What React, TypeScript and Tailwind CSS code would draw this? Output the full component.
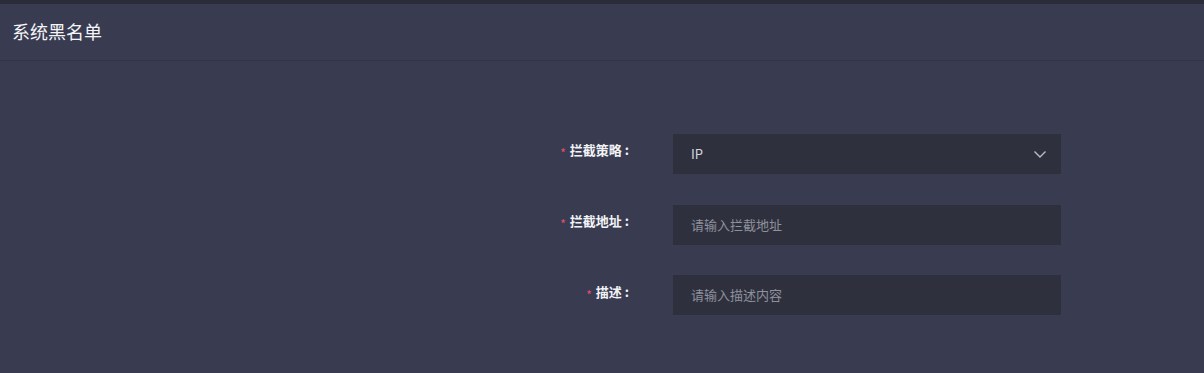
import React from "react";

const font = { fontFamily: '"Noto Sans CJK SC", "Liberation Sans", sans-serif' };

function Label({ text }: { text: string }) {
  return (
    <div className="flex h-[40px] items-center justify-end pr-[4px] pb-[8px] text-[13px] font-bold text-[#f2f3f7]">
      <span className="mr-[4px] mt-[6px] text-[12px] font-normal leading-none text-[#e2506a]">*</span>
      <span>{text}</span>
      <span className="ml-[3px]">:</span>
    </div>
  );
}

export default function App() {
  return (
    <div className="h-[373px] w-full overflow-hidden bg-[#393c50]" style={font}>
      <div className="h-[4px] bg-[#2a2c38]" />
      <div className="flex h-[57px] items-center border-b border-[#33364a] pl-[12px] pb-[2px] text-[18px] text-[#f4f5f8]">
        系统黑名单
      </div>
      <div className="grid grid-cols-[633px_388px] gap-x-[40px] gap-y-[31px] pt-[73px]">
        <Label text="拦截策略" />
        <div className="flex h-[40px] items-center justify-between bg-[#2e303e] pl-[18px] pr-[14px] text-[13px] text-[#d6d7de]">
          <span>IP</span>
          <svg width="14" height="14" viewBox="0 0 14 14" fill="none">
            <path d="M1.5 4.5 L7 10 L12.5 4.5" stroke="#b9bbc6" strokeWidth="1.4" />
          </svg>
        </div>
        <Label text="拦截地址" />
        <div className="flex h-[40px] items-center bg-[#2e303e] pl-[18px] text-[13px] text-[#8f919c]">
          请输入拦截地址
        </div>
        <div className="-mt-[1px] contents">
          <Label text="描述" />
        </div>
        <div className="-mt-[1px] flex h-[40px] items-center bg-[#2e303e] pl-[18px] text-[13px] text-[#8f919c]">
          请输入描述内容
        </div>
      </div>
    </div>
  );
}
